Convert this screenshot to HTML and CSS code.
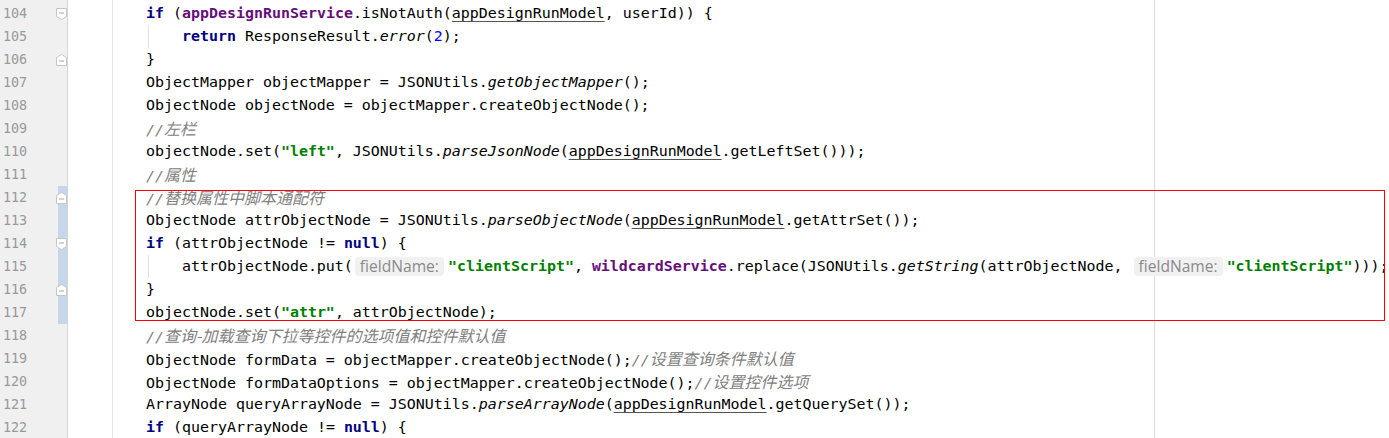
FILE: index.html
```html
<!DOCTYPE html>
<html lang="zh">
<head>
    <meta charset="UTF-8">
    <title>Editor</title>
    <link rel="stylesheet" href="styles.css">
</head>
<body>

    <div class="editor">
        <!-- right margin guide -->
        <div class="margin-guide"></div>

        <!-- gutter: line numbers, fold markers, change bar -->
        <div class="gutter">
            <div class="ln"><span class="num">104</span><svg width="11" height="12" viewBox="0 0 11 12"><path class="fold" d="M0.5 0.5H10.5V8.5L5.5 11.5L0.5 8.5Z"/><path class="dash" d="M3 5H8"/></svg></div>
            <div class="ln"><span class="num">105</span></div>
            <div class="ln"><span class="num">106</span><svg width="11" height="12" viewBox="0 0 11 12"><path class="fold" d="M0.5 3.5L5.5 0.5L10.5 3.5V11.5H0.5Z"/><path class="dash" d="M3 7H8"/></svg></div>
            <div class="ln"><span class="num">107</span></div>
            <div class="ln"><span class="num">108</span></div>
            <div class="ln"><span class="num">109</span></div>
            <div class="ln"><span class="num">110</span></div>
            <div class="ln"><span class="num">111</span></div>
            <div class="ln changed"><span class="num">112</span><svg width="11" height="12" viewBox="0 0 11 12"><path class="fold" d="M0.5 3.5L5.5 0.5L10.5 3.5V11.5H0.5Z"/><path class="dash" d="M3 7H8"/></svg></div>
            <div class="ln changed"><span class="num">113</span></div>
            <div class="ln changed"><span class="num">114</span><svg width="11" height="12" viewBox="0 0 11 12"><path class="fold" d="M0.5 0.5H10.5V8.5L5.5 11.5L0.5 8.5Z"/><path class="dash" d="M3 5H8"/></svg></div>
            <div class="ln changed"><span class="num">115</span></div>
            <div class="ln changed"><span class="num">116</span><svg width="11" height="12" viewBox="0 0 11 12"><path class="fold" d="M0.5 3.5L5.5 0.5L10.5 3.5V11.5H0.5Z"/><path class="dash" d="M3 7H8"/></svg></div>
            <div class="ln changed"><span class="num">117</span></div>
            <div class="ln"><span class="num">118</span></div>
            <div class="ln"><span class="num">119</span></div>
            <div class="ln"><span class="num">120</span></div>
            <div class="ln"><span class="num">121</span></div>
            <div class="ln"><span class="num">122</span></div>
        </div>

        <!-- code -->
        <div class="code">
            <div class="lines">
<div class="row"><span class="kw">if</span> (<span class="fd">appDesignRunService</span>.isNotAuth(<span class="ul">appDesignRunModel</span>, userId)) {</div>
<div class="row ind">    <span class="kw">return</span> ResponseResult.<span class="it">error</span>(<span class="nm">2</span>);</div>
<div class="row">}</div>
<div class="row">ObjectMapper objectMapper = JSONUtils.<span class="it">getObjectMapper</span>();</div>
<div class="row">ObjectNode objectNode = objectMapper.createObjectNode();</div>
<div class="row"><span class="cm">//<span class="zh">左栏</span></span></div>
<div class="row">objectNode.set(<span class="st">"left"</span>, JSONUtils.<span class="it">parseJsonNode</span>(<span class="ul">appDesignRunModel</span>.getLeftSet()));</div>
<div class="row"><span class="cm">//<span class="zh">属性</span></span></div>
<div class="row"><span class="cm">//<span class="zh">替换属性中脚本通配符</span></span></div>
<div class="row">ObjectNode attrObjectNode = JSONUtils.<span class="it">parseObjectNode</span>(<span class="ul">appDesignRunModel</span>.getAttrSet());</div>
<div class="row"><span class="kw">if</span> (attrObjectNode != <span class="kw">null</span>) {</div>
<div class="row ind">    attrObjectNode.put(<span class="hint">fieldName:</span><span class="st">"clientScript"</span>, <span class="fd">wildcardService</span>.replace(JSONUtils.<span class="it">getString</span>(attrObjectNode, <span class="hint">fieldName:</span><span class="st">"clientScript"</span>)));</div>
<div class="row">}</div>
<div class="row">objectNode.set(<span class="st">"attr"</span>, attrObjectNode);</div>
<div class="row"><span class="cm">//<span class="zh">查询-加载查询下拉等控件的选项值和控件默认值</span></span></div>
<div class="row">ObjectNode formData = objectMapper.createObjectNode();<span class="cm">//<span class="zh">设置查询条件默认值</span></span></div>
<div class="row">ObjectNode formDataOptions = objectMapper.createObjectNode();<span class="cm">//<span class="zh">设置控件选项</span></span></div>
<div class="row">ArrayNode queryArrayNode = JSONUtils.<span class="it">parseArrayNode</span>(<span class="ul">appDesignRunModel</span>.getQuerySet());</div>
<div class="row"><span class="kw">if</span> (queryArrayNode != <span class="kw">null</span>) {</div>
            </div>
        </div>

        <!-- highlight annotation -->
        <div class="mark"></div>
    </div>

</body>
</html>
```

FILE: styles.css
```css
body {
    margin: 0;
    background: #ffffff;
}
.editor {
    position: relative;
    z-index: 0;
    display: flex;
    height: 438px;
    overflow: hidden;
    font-family: "DejaVu Sans Mono", "Noto Sans CJK SC", monospace;
}
.margin-guide {
    position: absolute;
    left: 1154px;
    top: 0;
    bottom: 0;
    width: 1px;
    background: #dcdcdc;
    z-index: -1;
}
.gutter {
    flex: none;
    width: 67px;
    padding-top: 2px;
    background: #f0f0f0;
    border-right: 1px solid #d5d5d5;
}
.ln {
    display: flex;
    align-items: center;
    height: 23px;
}
.ln.changed {
    background: linear-gradient(90deg, transparent 58px, #c5d7e8 58px);
}
.num {
    width: 55px;
    padding-left: 3px;
    font-size: 13.4px;
    color: #999999;
}
.ln svg {
    flex: none;
    margin-left: 4px;
}
.fold {
    fill: #ffffff;
    stroke: #c6c6c6;
    stroke-width: 1;
}
.dash {
    stroke: #a8a8a8;
    stroke-width: 1;
}
.code {
    flex: 1;
    padding-left: 44px;
}
.lines {
    height: 100%;
    padding-top: 2px;
    padding-left: 33px;
    border-left: 1px solid #e6e6e6;
    box-sizing: border-box;
}
.row {
    height: 23px;
    line-height: 23px;
    white-space: pre;
    font-size: 14.95px;
    color: #000000;
}
.row.ind {
    background: linear-gradient(#e2e2e2, #e2e2e2) 2px 0 / 1px 100% no-repeat;
}
.kw { color: #000080; font-weight: bold; }
.fd { color: #660e7a; font-weight: bold; }
.st { color: #008000; font-weight: bold; }
.nm { color: #0000ff; }
.it { font-style: italic; }
.cm { color: #808080; font-style: italic; }
.ul {
    text-decoration: underline;
    text-decoration-color: #555555;
    text-underline-offset: 3px;
}
.zh {
    font-family: "Noto Sans CJK SC", sans-serif;
    font-size: 16px;
}
.hint {
    display: inline-block;
    vertical-align: top;
    height: 19px;
    line-height: 19px;
    margin: 2px 4px 0 2px;
    padding: 0 5px;
    border-radius: 4px;
    background: #f1f1f1;
    color: #8a8a8a;
    font-family: "Open Sans", sans-serif;
    font-size: 15.6px;
    font-style: normal;
    font-weight: normal;
}
.mark {
    position: absolute;
    left: 135px;
    top: 190px;
    width: 1248px;
    height: 129px;
    border: 1px solid #ff0000;
}
```
